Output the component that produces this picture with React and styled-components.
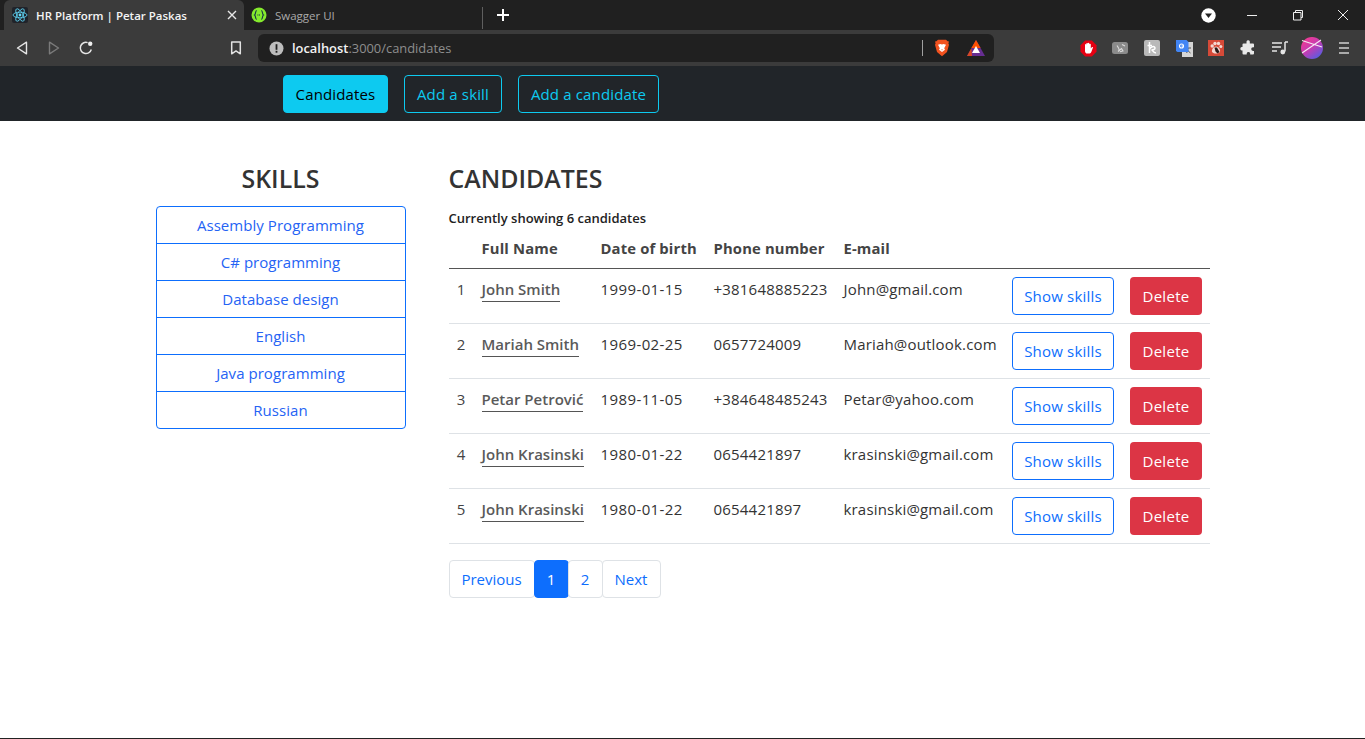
import React from "react";
import styled, { createGlobalStyle } from "styled-components";

const Global = createGlobalStyle`
  html, body { margin: 0; padding: 0; background: #fff; }
  body { font-family: "Open Sans", "Noto Sans", sans-serif; height: 739px; overflow: hidden; }
  #root { height: 739px; }
  * { box-sizing: border-box; }
`;

const Page = styled.div`
  height: 739px; display: flex; flex-direction: column; background: #fff; border-bottom: 1px solid #222;
`;
const TabStrip = styled.div`
  height: 30px; background: #202020; display: flex; align-items: stretch; padding-left: 4px; flex: none;
`;
const Tab = styled.div`
  width: 240px; display: flex; align-items: center; gap: 8px; padding-left: 8px;
  background: ${p => (p.$active ? "#3b3b3b" : "transparent")};
  color: ${p => (p.$active ? "#f4f4f4" : "#a9a9a9")};
  border-radius: 6px 6px 0 0;
  font-size: 11.5px; font-weight: ${p => (p.$active ? 600 : 400)};
  position: relative;
`;
const SecondTab = styled(Tab)`
  flex: none; width: 238px; padding-left: 7px;
`;
const TabDivider = styled.div`
  width: 1px; height: 22px; background: #5f5f5f; align-self: flex-end; margin-bottom: 1px;
`;
const TabClose = styled.span`
  position: absolute; right: 5px; top: 8px; display: flex;
`;
const NewTab = styled.div`
  width: 40px; display: flex; align-items: center; justify-content: center;
`;
const WindowControls = styled.div`
  margin-left: auto; display: flex; align-items: center;
`;
const Profile = styled.div`
  width: 42px; height: 30px; display: flex; align-items: center; justify-content: center;
`;
const WinBtn = styled.div`
  width: ${p => p.$w || 46}px; height: 30px; display: flex; align-items: center; justify-content: center;
`;
const Toolbar = styled.div`
  height: 36px; background: #3b3b3b; display: flex; align-items: center; flex: none; position: relative;
`;
const NavIcons = styled.div`
  display: flex; align-items: center; padding-left: 16px; width: 258px;
`;
const IconSlot = styled.div`
  margin-left: ${p => p.$ml || 0}px; display: flex;
`;
const Omnibox = styled.div`
  width: 736px; height: 28px; background: #202020; border-radius: 6px; display: flex; align-items: center;
  padding-left: 11px; gap: 8px; font-size: 12.9px; color: #8e8e8e; flex: none;
`;
const Host = styled.span` color: #f2f2f2; font-weight: 600; `;
const OmniRight = styled.div`
  margin-left: auto; display: flex; align-items: center; height: 100%;
`;
const OmniDivider = styled.div` width: 1px; height: 16px; background: #a0a0a0; margin-right: 11px; `;
const OmniIcon = styled.div` display: flex; margin-right: ${p => p.$mr || 0}px; `;
const Extensions = styled.div`
  position: absolute; right: 0; top: 0; height: 36px; display: flex; align-items: center; padding-right: 5px;
`;
const Ext = styled.div`
  width: 32px; display: flex; justify-content: center;
`;
const Navbar = styled.nav`
  height: 55px; background: #212529; display: flex; align-items: center; padding-left: 283px; gap: 16px; flex: none;
`;
const NavBtn = styled.button`
  height: 38px; width: ${p => p.$w}px; padding: 0; border: 1px solid #0dcaf0; border-radius: 4px;
  background: ${p => (p.$on ? "#0dcaf0" : "transparent")};
  color: ${p => (p.$on ? "#000" : "#0dcaf0")};
  font: 400 15px "Open Sans", sans-serif; letter-spacing: 0.15px;
`;
const Content = styled.main`
  width: 1054px; margin: 0 auto; display: flex; gap: 43px; padding-top: 38px;
`;
const Aside = styled.aside` width: 250px; flex: none; `;
const Heading = styled.h2`
  margin: 0; font-size: 24.9px; font-weight: 600; line-height: 38px; color: #333; height: 47px;
  text-align: ${p => (p.$center ? "center" : "left")};
`;
const SkillList = styled.ul`
  margin: 0; padding: 0; list-style: none; border: 1px solid #0d6efd; border-radius: 4px; overflow: hidden;
`;
const SkillItem = styled.li`
  height: ${p => (p.$first ? 36 : 37)}px; display: flex; align-items: center; justify-content: center;
  color: #2563f4; font-size: 15px; letter-spacing: 0.05px;
  border-top: ${p => (p.$first ? "0" : "1px solid #0d6efd")};
`;
const Main = styled.section` width: 761px; flex: none; `;
const Caption = styled.div`
  font-size: 13px; font-weight: 600; color: #222; line-height: 17px; height: 26px; margin-top: 4px;
`;
const Table = styled.table`
  width: 761px; border-collapse: collapse; table-layout: fixed;
`;
const Th = styled.th`
  width: ${p => p.$w}px; height: 32px; padding: 0 8px 8px; text-align: left; font-size: 14.8px; font-weight: 700; color: #444;
  border-bottom: 1px solid #555; letter-spacing: 0.15px; white-space: nowrap;
`;
const Tr = styled.tr` height: 55px; border-bottom: 1px solid #dee2e6; `;
const Td = styled.td`
  padding: 8px; font-size: 15px; color: #333; vertical-align: top; white-space: nowrap;
  letter-spacing: ${p => p.$ls || 0}px; line-height: 24px;
`;
const IndexCell = styled(Td)` text-align: center; padding-left: 0; padding-right: 0; color: #444; `;
const NameLink = styled.a`
  display: inline-block; color: #5a5a5a; font-weight: 600; border-bottom: 1px solid #555; line-height: 24px; height: 25px;
`;
const OutlineBtn = styled.button`
  width: 102px; height: 38px; border: 1px solid #0d6efd; border-radius: 4px; background: #fff; color: #0d6efd;
  font: 400 15px "Open Sans", sans-serif; letter-spacing: 0.2px; padding: 0 0 0 1px;
`;
const DangerBtn = styled.button`
  width: 72px; height: 38px; border: 0; border-radius: 4px; background: #dc3545; color: #fff;
  font: 400 15px "Open Sans", sans-serif; letter-spacing: 0.3px; padding: 0 0 0 1px;
`;
const Pager = styled.div` display: flex; margin-top: 16px; `;
const PageBtn = styled.div`
  height: 38px; width: ${p => p.$w}px; display: flex; align-items: center; justify-content: center;
  border: 1px solid ${p => (p.$on ? "#0d6efd" : "#dee2e6")}; border-radius: 4px; margin-left: ${p => (p.$first ? 0 : -1)}px;
  background: ${p => (p.$on ? "#0d6efd" : "#fff")}; color: ${p => (p.$on ? "#fff" : "#0d6efd")};
  font-size: 15px;
`;

const ReactIcon = () => (
  <svg width="16" height="16" viewBox="0 0 16 16">
    <rect width="16" height="16" rx="2" fill="#20232a" />
    <g fill="none" stroke="#61dafb" strokeWidth="0.8">
      <ellipse cx="8" cy="8" rx="7" ry="2.8" />
      <ellipse cx="8" cy="8" rx="7" ry="2.8" transform="rotate(60 8 8)" />
      <ellipse cx="8" cy="8" rx="7" ry="2.8" transform="rotate(120 8 8)" />
    </g>
    <circle cx="8" cy="8" r="1.4" fill="#61dafb" />
  </svg>
);
const SwaggerIcon = () => (
  <svg width="16" height="16" viewBox="0 0 16 16">
    <circle cx="8" cy="8" r="7.5" fill="#85ea2d" />
    <path d="M5.8 3.5C4 3.5 5 7.2 3.6 8 5 8.8 4 12.5 5.8 12.5M10.2 3.5C12 3.5 11 7.2 12.4 8 11 8.8 12 12.5 10.2 12.5" fill="none" stroke="#173647" strokeWidth="1.2" />
    <path d="M6.4 8h3.2" stroke="#173647" strokeWidth="1.2" strokeDasharray="1 .6" />
  </svg>
);
const Back = () => (
  <svg width="12" height="14" viewBox="0 0 12 14"><path d="M10.5 1.2 1.5 7l9 5.8z" fill="none" stroke="#e6e6e6" strokeWidth="1.4" strokeLinejoin="round" /></svg>
);
const Forward = () => (
  <svg width="12" height="14" viewBox="0 0 12 14"><path d="M1.5 1.2 10.5 7l-9 5.8z" fill="none" stroke="#7a7a7a" strokeWidth="1.4" strokeLinejoin="round" /></svg>
);
const Reload = () => (
  <svg width="16" height="16" viewBox="0 0 16 16">
    <path d="M13.3 9.5A5.6 5.6 0 1 1 9.6 2.6" fill="none" stroke="#e6e6e6" strokeWidth="1.5" />
    <circle cx="12.2" cy="3.8" r="2.2" fill="#efefef" />
  </svg>
);
const Bookmark = () => (
  <svg width="12" height="14" viewBox="0 0 12 14"><path d="M1.7 1h8.6v11.8L6 9.9l-4.3 2.9z" fill="none" stroke="#e2e2e2" strokeWidth="1.5" strokeLinejoin="round" /></svg>
);
const Info = () => (
  <svg width="15" height="15" viewBox="0 0 15 15">
    <circle cx="7.5" cy="7.5" r="7" fill="#bdbdbd" />
    <rect x="6.6" y="3.2" width="1.8" height="5.6" fill="#202020" />
    <rect x="6.6" y="9.8" width="1.8" height="1.9" fill="#202020" />
  </svg>
);
const Brave = () => (
  <svg width="16" height="18" viewBox="0 0 16 18">
    <path d="M4 .8h8l1.6 1.5 1.4.3-.6 2 .6 1.2-2 7.2L8 17.2 3 13l-2-7.2.6-1.2-.6-2 1.4-.3z" fill="#f1521f" />
    <path d="M4 5.8 6.5 5 8 5.6 9.5 5 12 5.8l-1.8 3.4.8 1.6L8 13l-3-2.2.8-1.6z" fill="#fff" />
    <path d="M7 10.6h2L8 11.6z" fill="#f1521f" />
  </svg>
);
const Bat = () => (
  <svg width="18" height="16" viewBox="0 0 18 16">
    <path d="M9 0 18 16H0z" fill="#662d91" />
    <path d="M9 0 13.6 8H4.4z" fill="#ff5000" />
    <path d="M4.4 8 0 16h5z" fill="#ff5000" opacity=".75" />
    <path d="M9 6 13 13H5z" fill="#fff" />
  </svg>
);
const AdBlock = () => (
  <svg width="17" height="17" viewBox="0 0 17 17">
    <path d="M5.2.5h6.6l4.7 4.7v6.6l-4.7 4.7H5.2L.5 11.8V5.2z" fill="#e60012" />
    <path d="M5 8V4.5a.8.8 0 0 1 1.3 0V3.5a.8.8 0 0 1 1.5 0v-.3a.8.8 0 0 1 1.5 0v1a.8.8 0 0 1 1.5 0V8.5l1-1.2c.7-.6 1.5 0 1 .8L11.3 12c-.6.9-1.2 1.6-2.5 1.6H7.3C5.8 13.6 5 12.4 5 11z" fill="#fff" />
  </svg>
);
const GreyExt = () => (
  <svg width="16" height="12" viewBox="0 0 16 12">
    <rect width="16" height="12" rx="2.5" fill="#8b8b8b" />
    <path d="M5 3.5c1.5 2 2.5 3.5 2 5.5M6 9.5l3.5-3 1.5 2.500-3 .8M10 2.500l3 1.500" fill="none" stroke="#dcdcdc" strokeWidth="1.1" />
  </svg>
);
const KExt = () => (
  <svg width="16" height="16" viewBox="0 0 16 16">
    <rect width="16" height="16" rx="2" fill="#b9b9b9" />
    <path d="M5.5 2v11M3.5 5.500h4.500M5.500 9.500c1-3 5-4 5.500-1.500.3 1.500-2 1.800-3.500 2 1.800.3 2 3.500 4.500 2.700" fill="none" stroke="#fff" strokeWidth="1.5" />
  </svg>
);
const Translate = () => (
  <svg width="17" height="17" viewBox="0 0 17 17">
    <rect x="6" y="2" width="11" height="15" fill="#d6d6d6" />
    <path d="M9.5 8h5.500M12.200 8l-1.500 5M11 8c.6 2 1.600 4 3.500 5" fill="none" stroke="#555" strokeWidth="1" />
    <path d="M0 0h10.500l2 2v10H1.500L0 11z" fill="#4285f4" />
    <circle cx="5.5" cy="6" r="2" fill="none" stroke="#fff" strokeWidth="1.1" />
    <path d="M5.5 6h2" stroke="#fff" strokeWidth="1" />
  </svg>
);
const PawExt = () => (
  <svg width="16" height="16" viewBox="0 0 16 16">
    <rect width="16" height="16" fill="#d64a38" />
    <g fill="#f4d8d2">
      <circle cx="4.2" cy="6" r="1.7" /><circle cx="7" cy="3.5" r="1.7" /><circle cx="10.5" cy="3.5" r="1.7" /><circle cx="12.8" cy="6.5" r="1.5" />
    </g>
    <path d="M8 6.5c2.500 0 4.500 3 4 5-.4 1.500-2 2-4 2s-3.600-.5-4-2c-.5-2 1.500-5 4-5z" fill="#f4d8d2" />
    <path d="M6.5 7.500h2.500l2.500 4.500-2 1.500-2-2z" fill="#2a1a18" />
  </svg>
);
const Puzzle = () => (
  <svg width="16" height="16" viewBox="0 0 16 16">
    <path d="M6.5 1.500a1.700 1.700 0 0 1 3.300 0V3.500H13a1 1 0 0 1 1 1v2.800h-1a1.800 1.800 0 0 0 0 3.600h1v2.600a1 1 0 0 1-1 1h-2.800v-1a1.800 1.800 0 0 0-3.500 0v1H3.500a1 1 0 0 1-1-1v-3H1.700a1.800 1.800 0 0 1 0-3.500h.8V4.500a1 1 0 0 1 1-1h3z" fill="#e8e8e8" />
  </svg>
);
const Playlist = () => (
  <svg width="17" height="14" viewBox="0 0 17 14">
    <path d="M0 2h10M0 6h9M0 10h5" stroke="#e6e6e6" strokeWidth="1.5" />
    <path d="M13 1v9.500" stroke="#e6e6e6" strokeWidth="1.5" />
    <path d="M13 1h3" stroke="#e6e6e6" strokeWidth="1.5" />
    <circle cx="10.8" cy="11" r="2.4" fill="#e6e6e6" />
  </svg>
);
const Avatar = () => (
  <svg width="22" height="22" viewBox="0 0 22 22">
    <defs>
      <linearGradient id="av" x1="0.2" y1="0.1" x2="0.8" y2="0.9">
        <stop offset="0" stopColor="#ee3a96" /><stop offset="0.5" stopColor="#c13cb4" /><stop offset="1" stopColor="#5f5adf" />
      </linearGradient>
    </defs>
    <circle cx="11" cy="11" r="11" fill="url(#av)" />
    <path d="M1 16 20 3M1 3.500 21 10" stroke="#f6e6f4" strokeWidth="1.1" fill="none" />
  </svg>
);
const Kebab = () => (
  <svg width="10" height="12" viewBox="0 0 10 12"><path d="M0 1h10M0 6h10M0 11h10" stroke="#cfcfcf" strokeWidth="1.7" /></svg>
);

const skills = ["Assembly Programming", "C# programming", "Database design", "English", "Java programming", "Russian"];
const people = [
  ["John Smith", "1999-01-15", "+381648885223", "John@gmail.com"],
  ["Mariah Smith", "1969-02-25", "0657724009", "Mariah@outlook.com"],
  ["Petar Petrović", "1989-11-05", "+384648485243", "Petar@yahoo.com"],
  ["John Krasinski", "1980-01-22", "0654421897", "krasinski@gmail.com"],
  ["John Krasinski", "1980-01-22", "0654421897", "krasinski@gmail.com"],
];

export default function App() {
  return (
    <>
      <Global />
      <Page>
        <TabStrip>
          <Tab $active>
            <ReactIcon />
            <span>HR Platform | Petar Paskas</span>
            <TabClose>
              <svg width="14" height="14" viewBox="0 0 14 14"><path d="M3 3l8 8M11 3l-8 8" stroke="#e8e8e8" strokeWidth="1.4" /></svg>
            </TabClose>
          </Tab>
          <SecondTab>
            <SwaggerIcon />
            <span>Swagger UI</span>
          </SecondTab>
          <TabDivider />
          <NewTab>
            <svg width="14" height="14" viewBox="0 0 14 14"><path d="M7 1v12M1 7h12" stroke="#fff" strokeWidth="2" /></svg>
          </NewTab>
          <WindowControls>
            <Profile>
              <svg width="15" height="15" viewBox="0 0 15 15"><circle cx="7.5" cy="7.5" r="7.2" fill="#fff" /><path d="M4 5.5h7L7.5 10z" fill="#222" /></svg>
            </Profile>
            <WinBtn><svg width="12" height="12" viewBox="0 0 12 12"><path d="M1 6.500h10" stroke="#eee" /></svg></WinBtn>
            <WinBtn>
              <svg width="12" height="12" viewBox="0 0 12 12"><path d="M1.500 3.500h7.500v7.500h-7.500zM3.500 3.500v-2h7v7h-1.500" stroke="#eee" fill="none" /></svg>
            </WinBtn>
            <WinBtn $w={44}><svg width="12" height="12" viewBox="0 0 12 12"><path d="M1 1l10 10M11 1 1 11" stroke="#eee" /></svg></WinBtn>
          </WindowControls>
        </TabStrip>
        <Toolbar>
          <NavIcons>
            <Back />
            <IconSlot $ml={20}><Forward /></IconSlot>
            <IconSlot $ml={18}><Reload /></IconSlot>
            <IconSlot $ml={136}><Bookmark /></IconSlot>
          </NavIcons>
          <Omnibox>
            <Info />
            <span><Host>localhost</Host>:3000/candidates</span>
            <OmniRight>
              <OmniDivider />
              <OmniIcon $mr={17}><Brave /></OmniIcon>
              <OmniIcon $mr={9}><Bat /></OmniIcon>
            </OmniRight>
          </Omnibox>
          <Extensions>
            <Ext><AdBlock /></Ext>
            <Ext><GreyExt /></Ext>
            <Ext><KExt /></Ext>
            <Ext><Translate /></Ext>
            <Ext><PawExt /></Ext>
            <Ext><Puzzle /></Ext>
            <Ext><Playlist /></Ext>
            <Ext><Avatar /></Ext>
            <Ext><Kebab /></Ext>
          </Extensions>
        </Toolbar>
        <Navbar>
          <NavBtn $w={105} $on>Candidates</NavBtn>
          <NavBtn $w={98}>Add a skill</NavBtn>
          <NavBtn $w={141}>Add a candidate</NavBtn>
        </Navbar>
        <Content>
          <Aside>
            <Heading $center>SKILLS</Heading>
            <SkillList>
              {skills.map((s, i) => (
                <SkillItem key={s} $first={i === 0}>{s}</SkillItem>
              ))}
            </SkillList>
          </Aside>
          <Main>
            <Heading>CANDIDATES</Heading>
            <Caption>Currently showing 6 candidates</Caption>
            <Table>
              <thead>
                <tr>
                  <Th $w={25} />
                  <Th $w={119}>Full Name</Th>
                  <Th $w={113}>Date of birth</Th>
                  <Th $w={130}>Phone number</Th>
                  <Th $w={168}>E-mail</Th>
                  <Th $w={118} />
                  <Th $w={88} />
                </tr>
              </thead>
              <tbody>
                {people.map((p, i) => (
                  <Tr key={i}>
                    <IndexCell>{i + 1}</IndexCell>
                    <Td><NameLink>{p[0]}</NameLink></Td>
                    <Td $ls={0.4}>{p[1]}</Td>
                    <Td $ls={0.2}>{p[2]}</Td>
                    <Td $ls={0.18}>{p[3]}</Td>
                    <Td><OutlineBtn>Show skills</OutlineBtn></Td>
                    <Td><DangerBtn>Delete</DangerBtn></Td>
                  </Tr>
                ))}
              </tbody>
            </Table>
            <Pager>
              <PageBtn $first $w={86}>Previous</PageBtn>
              <PageBtn $on $w={35}>1</PageBtn>
              <PageBtn $w={35}>2</PageBtn>
              <PageBtn $w={59}>Next</PageBtn>
            </Pager>
          </Main>
        </Content>
      </Page>
    </>
  );
}
